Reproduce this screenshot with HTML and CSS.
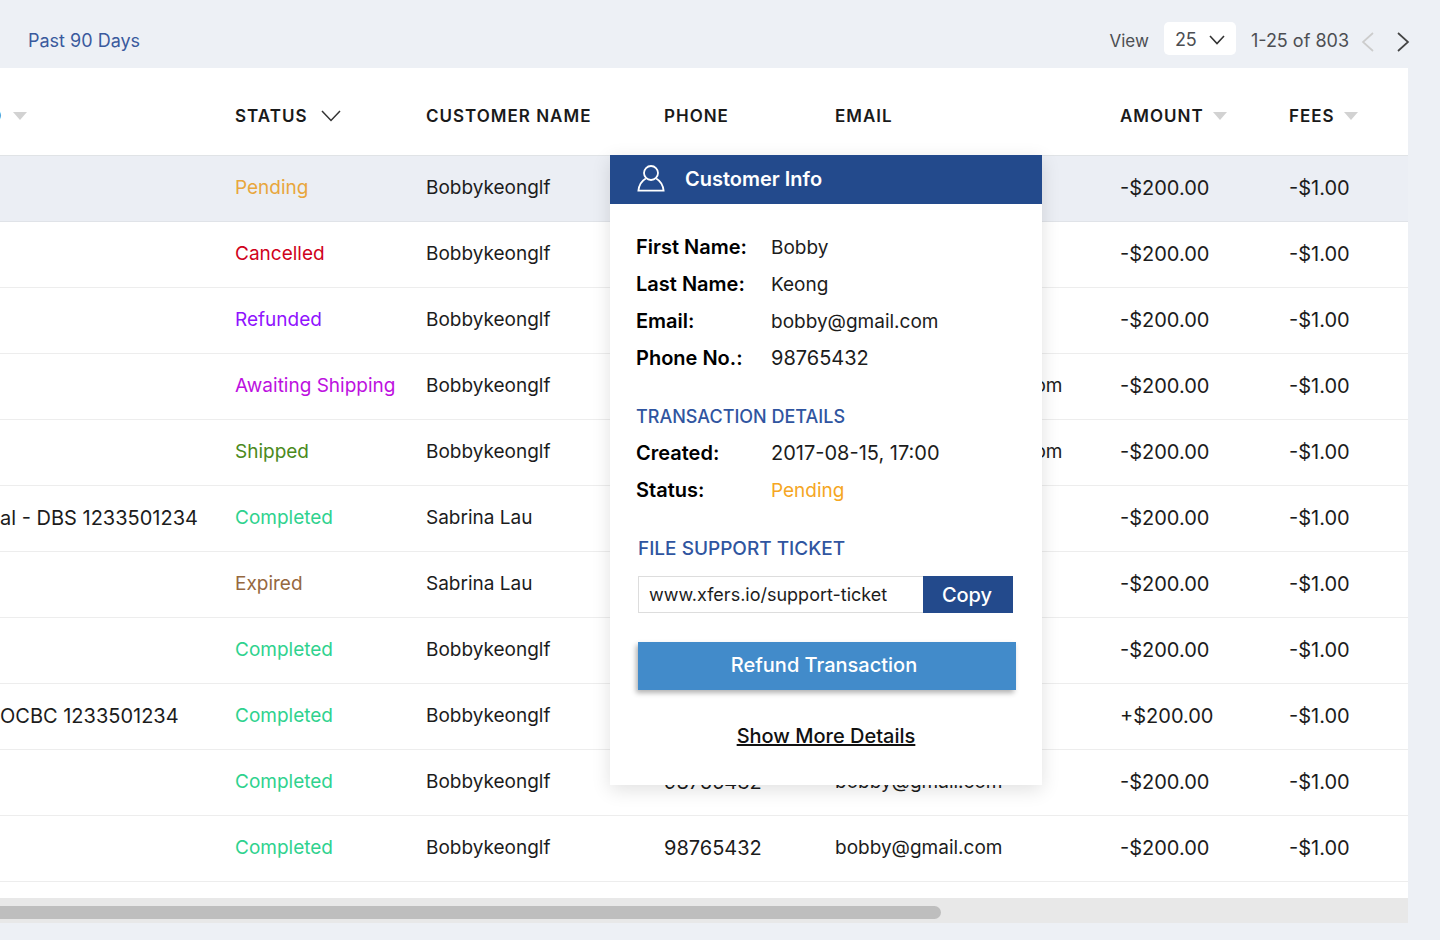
FILE: index.html
```
<!DOCTYPE html>
<html lang="en">
<head>
<meta charset="utf-8">
<title>Transactions</title>
<link rel="stylesheet" href="styles.css">
</head>
<body>
<header class="toolbar">
  <a class="range-link" href="#">Past 90 Days</a>
  <div class="pager">
    <label class="pager-label" for="page-size">View</label>
    <span class="page-size">
      <select id="page-size"><option>25</option></select>
      <svg class="page-size-icon" width="18" height="12" viewBox="0 0 18 12" aria-hidden="true"><path d="M2 2l7 7.500 7-7.500"/></svg>
    </span>
    <span class="pager-count">1-25 of 803</span>
    <button class="pager-button" type="button" aria-label="Previous page" disabled><svg width="14" height="20" viewBox="0 0 14 20"><path d="M12 1L2 10l10 9"/></svg></button>
    <button class="pager-button" type="button" aria-label="Next page"><svg width="14" height="20" viewBox="0 0 14 20"><path d="M2 1L12 10 2 19"/></svg></button>
  </div>
</header>
<main class="panel">
  <table class="transactions">
    <colgroup><col class="col-account"><col class="col-status"><col class="col-name"><col class="col-phone"><col><col class="col-amount"><col class="col-fees"></colgroup>
    <thead>
      <tr>
        <th><span class="head-cell head-account">D<svg class="sort" width="14" height="8" viewBox="0 0 14 8"><path d="M0 0h14L7 8z"/></svg></span></th>
        <th><span class="head-cell head-status">STATUS<svg class="sort-active" width="20" height="12" viewBox="0 0 20 12"><path d="M1 1l9 9.500L19 1"/></svg></span></th>
        <th>CUSTOMER NAME</th>
        <th>PHONE</th>
        <th>EMAIL</th>
        <th><span class="head-cell">AMOUNT<svg class="sort" width="14" height="8" viewBox="0 0 14 8"><path d="M0 0h14L7 8z"/></svg></span></th>
        <th><span class="head-cell">FEES<svg class="sort" width="14" height="8" viewBox="0 0 14 8"><path d="M0 0h14L7 8z"/></svg></span></th>
      </tr>
    </thead>
    <tbody>
      <tr class="selected"><td></td><td class="pending">Pending</td><td>Bobbykeonglf</td><td class="number">98765432</td><td>bobby@gmail.com</td><td class="number">-$200.00</td><td class="number">-$1.00</td></tr>
      <tr><td></td><td class="cancelled">Cancelled</td><td>Bobbykeonglf</td><td class="number">98765432</td><td>bobby@gmail.com</td><td class="number">-$200.00</td><td class="number">-$1.00</td></tr>
      <tr><td></td><td class="refunded">Refunded</td><td>Bobbykeonglf</td><td class="number">98765432</td><td>bobby@gmail.com</td><td class="number">-$200.00</td><td class="number">-$1.00</td></tr>
      <tr><td></td><td class="awaiting">Awaiting Shipping</td><td>Bobbykeonglf</td><td class="number">98765432</td><td>bobby.keong@gmail.com</td><td class="number">-$200.00</td><td class="number">-$1.00</td></tr>
      <tr><td></td><td class="shipped">Shipped</td><td>Bobbykeonglf</td><td class="number">98765432</td><td>bobby.keong@gmail.com</td><td class="number">-$200.00</td><td class="number">-$1.00</td></tr>
      <tr><td class="number">al - DBS 1233501234</td><td class="completed">Completed</td><td>Sabrina Lau</td><td class="number">98765432</td><td>bobby@gmail.com</td><td class="number">-$200.00</td><td class="number">-$1.00</td></tr>
      <tr><td></td><td class="expired">Expired</td><td>Sabrina Lau</td><td class="number">98765432</td><td>bobby@gmail.com</td><td class="number">-$200.00</td><td class="number">-$1.00</td></tr>
      <tr><td></td><td class="completed">Completed</td><td>Bobbykeonglf</td><td class="number">98765432</td><td>bobby@gmail.com</td><td class="number">-$200.00</td><td class="number">-$1.00</td></tr>
      <tr><td class="number">OCBC 1233501234</td><td class="completed">Completed</td><td>Bobbykeonglf</td><td class="number">98765432</td><td>bobby@gmail.com</td><td class="number">+$200.00</td><td class="number">-$1.00</td></tr>
      <tr><td></td><td class="completed">Completed</td><td>Bobbykeonglf</td><td class="number">98765432</td><td>bobby@gmail.com</td><td class="number">-$200.00</td><td class="number">-$1.00</td></tr>
      <tr><td></td><td class="completed">Completed</td><td>Bobbykeonglf</td><td class="number">98765432</td><td>bobby@gmail.com</td><td class="number">-$200.00</td><td class="number">-$1.00</td></tr>
    </tbody>
  </table>
  <div class="scroll-track"><div class="scroll-thumb"></div></div>

  <section class="popover" aria-labelledby="popover-title">
    <div class="popover-head">
      <svg width="28" height="28" viewBox="0 0 28 28" aria-hidden="true"><circle cx="14" cy="8" r="7"/><path d="M8.800 13.500C4.500 16 2 20 1.400 25.700h25.200c-.6-5.700-3.100-9.700-7.400-12.200"/></svg>
      <h2 id="popover-title">Customer Info</h2>
    </div>
    <div class="popover-body">
      <dl class="details">
        <dt>First Name:</dt><dd>Bobby</dd>
        <dt>Last Name:</dt><dd>Keong</dd>
        <dt>Email:</dt><dd>bobby@gmail.com</dd>
        <dt>Phone No.:</dt><dd class="number">98765432</dd>
      </dl>
      <h3>TRANSACTION DETAILS</h3>
      <dl class="details">
        <dt>Created:</dt><dd class="number">2017-08-15, 17:00</dd>
        <dt>Status:</dt><dd class="pending">Pending</dd>
      </dl>
      <div class="support">
        <h3><label for="ticket-url">FILE SUPPORT TICKET</label></h3>
        <div class="ticket">
          <input id="ticket-url" type="text" value="www.xfers.io/support-ticket">
          <button type="button">Copy</button>
        </div>
        <button class="refund" type="button">Refund Transaction</button>
      </div>
      <a class="more-link" href="#">Show More Details</a>
    </div>
  </section>
</main>
</body>
</html>
```
FILE: styles.css
```
* { box-sizing: border-box; }

body {
  margin: 0;
  background: #edf0f5;
  color: #1c1c1c;
  font-family: Inter, "Liberation Sans", sans-serif;
  font-size: 19px;
  line-height: 24px;
}

button, input, select { font: inherit; color: inherit; }
svg { display: block; fill: none; stroke: currentColor; }

.number { font-size: 20px; }

.toolbar {
  display: flex;
  align-items: center;
  justify-content: space-between;
  height: 68px;
  padding: 14px 30px 0 28px;
  font-size: 18px;
}

.range-link { color: #3a5a9d; text-decoration: none; }

.pager {
  display: flex;
  align-items: center;
  color: #4c4e52;
}

.pager-label {
  margin-right: 15px;
  font-size: 17px;
}

.page-size {
  position: relative;
  margin: 0 15px 5px 0;
}

.page-size select {
  display: block;
  width: 72px;
  height: 33px;
  padding: 3px 11px 0;
  border: 0;
  border-radius: 5px;
  background: #fff;
  appearance: none;
}

.page-size-icon {
  position: absolute;
  top: 12px;
  right: 10px;
  color: #333;
  stroke-width: 1.6;
  pointer-events: none;
}

.pager-count { margin-right: 12px; }

.pager-button {
  padding: 2px 0 0;
  border: 0;
  background: none;
  color: #444;
}

.pager-button + .pager-button { margin-left: 21px; }
.pager-button svg { stroke-width: 1.7; }
.pager-button:disabled { color: #ccc; }

.panel {
  position: relative;
  margin-right: 32px;
  background: #fff;
}

.transactions {
  width: 100%;
  table-layout: fixed;
  border-collapse: separate;
  border-spacing: 0;
}

.col-account { width: 235px; }
.col-status { width: 191px; }
.col-name { width: 238px; }
.col-phone { width: 171px; }
.col-amount { width: 169px; }
.col-fees { width: 119px; }

.transactions th {
  height: 88px;
  padding: 8px 0 0;
  border-bottom: 1px solid #e0e3e6;
  color: #1a1a1a;
  font-size: 17px;
  font-weight: 600;
  letter-spacing: 1px;
  text-align: left;
  white-space: nowrap;
}

.head-cell {
  display: flex;
  align-items: center;
  gap: 9px;
}

.head-account { margin-left: -11px; gap: 11px; }
.head-status { gap: 14px; }
.sort { fill: #d2d2d2; stroke: none; }
.sort-active { stroke: #333; stroke-width: 1.5; }

.transactions td {
  height: 66px;
  padding: 0 0 1px;
  border-bottom: 1px solid #ededed;
  white-space: nowrap;
}

.transactions .selected td {
  background: #ebeef4;
  border-color: #e0e3e8;
}

.transactions .pending { color: #e8a63c; }
.transactions .cancelled { color: #d0021b; }
.transactions .refunded { color: #9013fe; }
.transactions .awaiting { color: #bd10e0; }
.transactions .shipped { color: #4b8a1c; }
.transactions .completed { color: #2fd28e; }
.transactions .expired { color: #96683f; }

.scroll-track {
  margin-top: 16px;
  padding: 8px 0 4px;
  background: #e8e8e8;
}

.scroll-thumb {
  width: 941px;
  height: 13px;
  border-radius: 0 7px 7px 0;
  background: #bebebe;
}

.popover {
  position: absolute;
  top: 87px;
  left: 610px;
  width: 432px;
  background: #fff;
  box-shadow: 0 5px 18px rgba(0, 0, 0, 0.12);
}

.popover-head {
  display: flex;
  align-items: center;
  gap: 20px;
  height: 49px;
  padding: 0 0 1px 27px;
  background: #234a8c;
  color: #fff;
}

.popover-head svg { stroke-width: 1.8; }

h2, h3, dl, dd { margin: 0; }
h2 { font-size: 20px; font-weight: 600; }

.popover-body {
  display: flex;
  flex-direction: column;
  padding: 25px 26px 37px;
}

.details {
  display: grid;
  grid-template-columns: 135px 1fr;
  line-height: 37px;
}

.details dt { color: #000; font-size: 20px; font-weight: 600; }
.details .pending { color: #f5a623; }

h3 {
  margin-top: 22px;
  color: #3055a0;
  font-size: 18px;
  font-weight: 500;
  line-height: 36px;
}

.support { padding-left: 2px; }
.support h3 { font-size: 19px; }

.ticket {
  display: flex;
  height: 37px;
  margin: 9px 3px 29px 0;
}

.ticket input {
  flex: 1;
  min-width: 0;
  padding: 0 10px;
  border: 1px solid #ddd;
  border-right: 0;
  border-radius: 0;
  font-size: 18px;
}

.ticket button {
  width: 90px;
  padding: 0 2px 0 0;
  border: 0;
  background: #234a8c;
  color: #fff;
  font-size: 20px;
  font-weight: 500;
}

.refund {
  display: block;
  width: 100%;
  height: 48px;
  padding: 0 6px 2px 0;
  border: 0;
  background: #428bca;
  box-shadow: -2px 3px 5px rgba(0, 0, 0, 0.3);
  color: #fff;
  font-size: 20px;
  font-weight: 500;
}

.more-link {
  align-self: center;
  margin-top: 34px;
  color: #111;
  font-size: 20px;
  font-weight: 500;
}
```
